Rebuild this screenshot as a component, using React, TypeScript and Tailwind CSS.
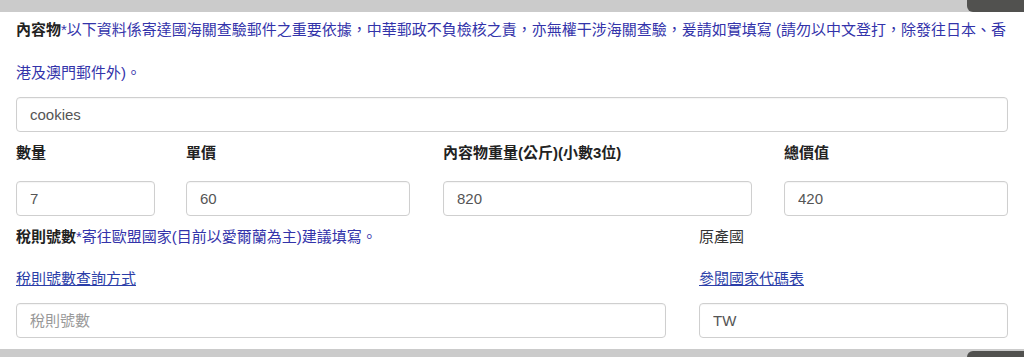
import React from 'react';

const font = { fontFamily: '"Liberation Sans", "Noto Sans CJK TC", sans-serif' };

const Field: React.FC<{ value?: string; placeholder?: string; className?: string }> = ({ value, placeholder, className }) => (
  <input
    readOnly
    defaultValue={value}
    placeholder={placeholder}
    className={`h-[35px] rounded-[4px] border border-[#cfcfcf] bg-white px-[13px] text-[15px] text-[#555] placeholder:text-[#999] outline-none shadow-[inset_0_1px_1px_rgba(0,0,0,0.04)] ${className ?? ''}`}
  />
);

const App: React.FC = () => {
  return (
    <div className="h-[357px] w-[1024px] overflow-hidden bg-white text-[15px]" style={font}>
      {/* top strip */}
      <div className="flex h-[12px] justify-end bg-[#cbcbcb]">
        <div className="h-full w-[57px] rounded-bl-[6px] bg-[#51514f]"></div>
      </div>

      <div className="px-4">
        <p className="-mt-1 leading-[43px]">
          <span className="font-bold text-[#222]">內容物</span>
          <span className="text-[#3333aa]">*以下資料係寄達國海關查驗郵件之重要依據，中華郵政不負檢核之責，亦無權干涉海關查驗，爰請如實填寫 (請勿以中文登打，除發往日本、香</span>
          <br />
          <span className="text-[#3333aa]">港及澳門郵件外)。</span>
        </p>

        <Field value="cookies" className="mt-[3px] w-full" />

        <div className="mt-[11px] flex">
          <div className="w-[170px]">
            <div className="leading-[20px] font-bold text-[#222]">數量</div>
            <Field value="7" className="mt-[18px] w-[139px]" />
          </div>
          <div className="w-[257px]">
            <div className="leading-[20px] font-bold text-[#222]">單價</div>
            <Field value="60" className="mt-[18px] w-[224px]" />
          </div>
          <div className="w-[341px]">
            <div className="leading-[20px] font-bold text-[#222]">內容物重量(公斤)(小數3位)</div>
            <Field value="820" className="mt-[18px] w-[309px]" />
          </div>
          <div className="w-[224px]">
            <div className="leading-[20px] font-bold text-[#222]">總價值</div>
            <Field value="420" className="mt-[18px] w-[224px]" />
          </div>
        </div>

        <div className="mt-[11px] flex">
          <div className="w-[683px]">
            <div className="leading-[20px]">
              <span className="font-bold text-[#222]">稅則號數</span>
              <span className="text-[#3333aa]">*寄往歐盟國家(目前以愛爾蘭為主)建議填寫。</span>
            </div>
            <a href="#" className="mt-[22px] block w-fit leading-[20px] text-[#2b3ea8] underline">稅則號數查詢方式</a>
            <Field placeholder="稅則號數" className="mt-[14px] w-[650px]" />
          </div>
          <div className="w-[309px]">
            <div className="leading-[20px] text-[#333]">原產國</div>
            <a href="#" className="mt-[22px] block w-fit leading-[20px] text-[#2b3ea8] underline">參閱國家代碼表</a>
            <Field value="TW" className="mt-[14px] w-[309px]" />
          </div>
        </div>
      </div>

      {/* bottom strip */}
      <div className="mt-[11px] flex h-[8px] justify-end bg-[#cbcbcb]">
        <div className="mt-[2px] h-[6px] w-[57px] rounded-tl-[6px] bg-[#51514f]"></div>
      </div>
    </div>
  );
};

export default App;
